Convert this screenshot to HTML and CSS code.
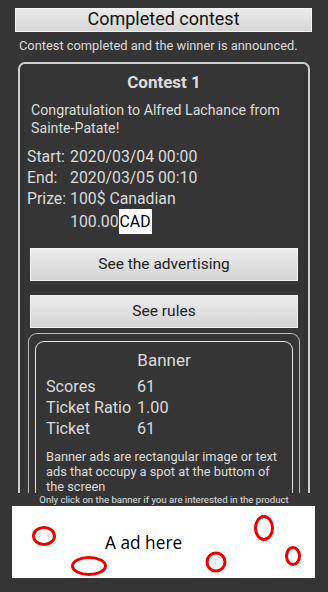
FILE: index.html
```html
<!DOCTYPE html>
<html>
<head>
<meta charset="utf-8">
<link rel="stylesheet" href="styles.css">
</head>
<body>
<div class="screen">
  <div class="content">
    <div class="top-btn">Completed contest</div>
    <div class="subtitle">Contest completed and the winner is announced.</div>
    <div class="card">
      <div class="card-title">Contest 1</div>
      <div class="congrats">Congratulation to Alfred Lachance from Sainte-Patate!</div>
      <div class="info">
        <div class="row"><span class="lbl">Start:</span><span>2020/03/04 00:00</span></div>
        <div class="row"><span class="lbl">End:</span><span>2020/03/05 00:10</span></div>
        <div class="row"><span class="lbl">Prize:</span><span>100$ Canadian</span></div>
        <div class="row row-amount"><span class="lbl"></span><span>100.00</span><span class="cad">CAD</span></div>
      </div>
      <div class="btn btn-first">See the advertising</div>
      <div class="btn">See rules</div>
      <div class="banner-outer">
        <div class="banner-inner">
          <div class="banner-title">Banner</div>
          <div class="stats">
            <div class="srow"><span class="slbl">Scores</span><span>61</span></div>
            <div class="srow"><span class="slbl">Ticket Ratio</span><span>1.00</span></div>
            <div class="srow"><span class="slbl">Ticket</span><span>61</span></div>
          </div>
          <div class="desc">Banner ads are rectangular image or text ads that occupy a spot at the buttom of the screen</div>
        </div>
      </div>
    </div>
  </div>
  <div class="footer">
    <div class="notice">Only click on the banner if you are interested in the product</div>
    <div class="ad">
      <svg class="ad-marks" viewBox="0 0 303 72" width="303" height="72">
        <g fill="none" stroke="#ee0000" stroke-width="3">
          <ellipse cx="32" cy="30" rx="10.5" ry="8.5"/>
          <ellipse cx="77" cy="60" rx="16.5" ry="8.5"/>
          <ellipse cx="204" cy="56" rx="9" ry="9"/>
          <ellipse cx="252" cy="22" rx="8.5" ry="11.5"/>
          <ellipse cx="281" cy="50" rx="6.5" ry="8.5"/>
        </g>
      </svg>
      <span class="ad-text">A ad here</span>
    </div>
  </div>
</div>
</body>
</html>
```
FILE: styles.css
```css
html, body {
  margin: 0;
  padding: 0;
}
body {
  background: #353535;
  font-family: Roboto, "Liberation Sans", sans-serif;
  color: #dcdcdc;
}
.screen {
  width: 328px;
  height: 592px;
  display: flex;
  flex-direction: column;
  overflow: hidden;
}
.content {
  flex: 1;
  min-height: 0;
  overflow: hidden;
  padding: 8px 16px 0 15px;
}
.top-btn {
  height: 24px;
  line-height: 21px;
  background: linear-gradient(#ececec, #d4d4d4);
  color: #111;
  font-size: 18px;
  text-align: center;
  box-shadow: inset 0 0 0 1px #f4f4f4;
}
.subtitle {
  margin-top: 6px;
  font-size: 12.85px;
  line-height: 16px;
  padding-left: 4px;
}
.card {
  margin: 8px 2px 0 3px;
  border: 2px solid #cfcfcf;
  border-bottom: none;
  border-radius: 7px 7px 0 0;
  padding: 8px 0 40px;
}
.card-title {
  font-weight: bold;
  font-size: 17px;
  line-height: 20px;
  text-align: center;
}
.congrats {
  margin-top: 9px;
  padding: 0 10px 0 11px;
  font-size: 14.2px;
  line-height: 18px;
}
.info {
  margin-top: 9px;
  padding-left: 7px;
  font-size: 15.8px;
}
.row {
  display: flex;
  line-height: 21px;
}
.lbl {
  width: 43px;
  flex: none;
}
.row-amount {
  align-items: center;
}
.cad {
  background: #fff;
  color: #000;
  line-height: 25px;
  padding: 0 1px;
}
.btn {
  margin: 14px 10px 0;
  height: 33px;
  line-height: 33px;
  background: linear-gradient(#ededed, #d2d2d2);
  color: #222;
  font-size: 15.5px;
  text-align: center;
  box-shadow: inset 0 0 0 1px #f2f2f2;
}
.btn-first {
  margin-top: 14px;
}
.banner-outer {
  margin: 5px 8px 0;
  border: 1.5px solid #bdbdbd;
  border-bottom: none;
  border-radius: 9px 9px 0 0;
  padding: 7px 6px 0;
}
.banner-inner {
  border: 1.5px solid #e6e6e6;
  border-bottom: none;
  border-radius: 9px 9px 0 0;
  padding: 8px 10px 40px;
}
.banner-title {
  font-size: 17px;
  line-height: 20px;
  text-align: center;
}
.stats {
  margin-top: 6px;
  font-size: 16.2px;
}
.srow {
  display: flex;
  line-height: 21px;
}
.slbl {
  width: 91px;
  flex: none;
}
.desc {
  margin-top: 10px;
  font-size: 12.8px;
  line-height: 15px;
}
.footer {
  flex: none;
  height: 99px;
  background: #353535;
}
.notice {
  height: 13px;
  line-height: 13px;
  font-size: 9.6px;
  text-align: center;
  color: #e0e0e0;
}
.ad {
  position: relative;
  margin: 0 13px 0 12px;
  height: 72px;
  background: #fff;
  display: flex;
  align-items: center;
  padding-left: 93px;
}
.ad-marks {
  position: absolute;
  left: 0;
  top: 0;
}
.ad-text {
  position: relative;
  font-family: "Open Sans", "Liberation Sans", sans-serif;
  font-size: 17.3px;
  color: #000;
}
```
